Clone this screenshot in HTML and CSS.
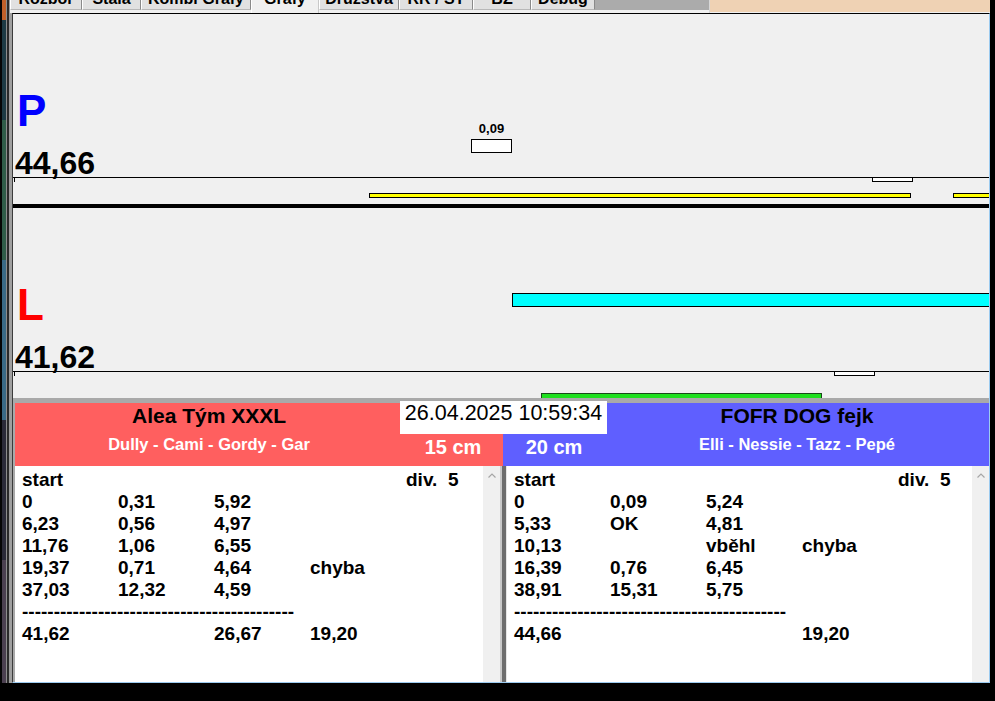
FILE: index.html
```html
<!DOCTYPE html>
<html lang="cs">
<head>
<meta charset="utf-8">
<title>Grafy</title>
<link rel="stylesheet" href="styles.css">
</head>
<body>
<div class="screen">
  <div class="desk"></div>
  <div class="app">
    <div class="tabstrip">
      <div class="tabs">
        <div class="tab w-rozbor"><span>Rozbor</span></div>
        <div class="tab w-stala"><span>Stála</span></div>
        <div class="tab w-kombi"><span>Kombi Grafy</span></div>
        <div class="tab w-grafy active"><span>Grafy</span></div>
        <div class="tab w-druz"><span>Družstva</span></div>
        <div class="tab w-rr"><span>RR / ST</span></div>
        <div class="tab w-bz"><span>BZ</span></div>
        <div class="tab w-debug"><span>Debug</span></div>
      </div>
      <div class="strip-gray"></div>
      <div class="strip-peach"></div>
    </div>

    <div class="main">
      <div class="chart">
        <div class="labels">
          <div class="side side-p">P</div>
          <div class="total">44,66</div>
        </div>
        <div class="axis"></div>
        <div class="lane"></div>
        <div class="tick"></div>
        <div class="flag" style="left:458px"><span class="flag-label">0,09</span><span class="flag-box"></span></div>
        <div class="slot" style="left:859px"></div>
        <div class="bar yellow" style="left:356px;width:542px"></div>
        <div class="bar yellow" style="left:940px;width:60px"></div>
      </div>

      <div class="sep"></div>

      <div class="chart">
        <div class="labels">
          <div class="side side-l">L</div>
          <div class="total">41,62</div>
        </div>
        <div class="axis"></div>
        <div class="lane"></div>
        <div class="tick"></div>
        <div class="bar cyan" style="left:499px;width:500px"></div>
        <div class="slot" style="left:821px"></div>
        <div class="bar green" style="left:528px;width:281px"></div>
      </div>

      <div class="bottom">
        <div class="header">
          <div class="team team-red">
            <div class="team-name">Alea Tým XXXL</div>
            <div class="team-dogs">Dully - Cami - Gordy - Gar</div>
            <div class="team-size">15 cm</div>
          </div>
          <div class="team team-blue">
            <div class="team-name">FOFR DOG fejk</div>
            <div class="team-dogs">Elli - Nessie - Tazz - Pepé</div>
            <div class="team-size">20 cm</div>
          </div>
          <div class="datebox">26.04.2025 10:59:34</div>
        </div>

        <div class="lists">
          <div class="list list-left">
            <div class="list-body">
              <div class="row"><span>start</span><span></span><span></span><span></span><span>div.  5</span></div>
              <div class="row"><span>0</span><span>0,31</span><span>5,92</span></div>
              <div class="row"><span>6,23</span><span>0,56</span><span>4,97</span></div>
              <div class="row"><span>11,76</span><span>1,06</span><span>6,55</span></div>
              <div class="row"><span>19,37</span><span>0,71</span><span>4,64</span><span>chyba</span></div>
              <div class="row"><span>37,03</span><span>12,32</span><span>4,59</span></div>
              <div class="row dash">-------------------------------------------</div>
              <div class="row"><span>41,62</span><span></span><span>26,67</span><span>19,20</span></div>
            </div>
            <div class="scroll">
              <svg class="arrow" width="8" height="5" viewBox="0 0 8 5"><path d="M0.5 4.5 L4 1 L7.5 4.5" fill="none" stroke="#a6a6a6" stroke-width="1.2"/></svg>
            </div>
          </div>
          <div class="gap"></div>
          <div class="list list-right">
            <div class="list-body">
              <div class="row"><span>start</span><span></span><span></span><span></span><span>div.  5</span></div>
              <div class="row"><span>0</span><span>0,09</span><span>5,24</span></div>
              <div class="row"><span>5,33</span><span>OK</span><span>4,81</span></div>
              <div class="row"><span>10,13</span><span></span><span>vběhl</span><span>chyba</span></div>
              <div class="row"><span>16,39</span><span>0,76</span><span>6,45</span></div>
              <div class="row"><span>38,91</span><span>15,31</span><span>5,75</span></div>
              <div class="row dash">-------------------------------------------</div>
              <div class="row"><span>44,66</span><span></span><span></span><span>19,20</span></div>
            </div>
            <div class="scroll">
              <svg class="arrow" width="8" height="5" viewBox="0 0 8 5"><path d="M0.5 4.5 L4 1 L7.5 4.5" fill="none" stroke="#a6a6a6" stroke-width="1.2"/></svg>
            </div>
          </div>
        </div>
      </div>
    </div>
  </div>
</div>
</body>
</html>
```

FILE: styles.css
```css
html, body {
  margin: 0;
  padding: 0;
  background: #000;
}

body {
  font-family: "Liberation Sans", Arial, sans-serif;
  color: #000;
}

.screen {
  width: 995px;
  height: 701px;
  display: flex;
  align-items: flex-start;
  background: #000;
  overflow: hidden;
}

.desk {
  width: 10px;
  height: 683px;
  background:
    linear-gradient(90deg, #050505 0 2px, transparent 2px 6px, #8c8c8c 6px 7px, #2a2a2a 7px 9px, #9a9a9a 9px 10px),
    linear-gradient(180deg, #c0602a 0 20px, #1d3a44 20px 120px, #2f5c48 120px 260px, #3a6a86 260px 420px, #2a2a38 420px 560px, #4b4050 560px 683px);
}

.app {
  width: 980px;
  height: 683px;
  display: flex;
  flex-direction: column;
  background: #a0a0a0;
}

/* ---------- tab strip ---------- */
.tabstrip {
  height: 13px;
  display: flex;
  flex: none;
}

.tabs {
  display: flex;
  width: 585px;
  height: 13px;
  background: #f0f0f0;
}

.tab {
  box-sizing: border-box;
  height: 10px;
  overflow: hidden;
  background: #e1e1e1;
  border-left: 1px solid #ffffff;
  border-right: 1px solid #8a8a8a;
  border-bottom: 1px solid #b8b8b8;
  text-align: center;
  font-weight: bold;
  font-size: 16px;
}

.tab span {
  display: block;
  line-height: 16px;
  margin-top: -9px;
  white-space: nowrap;
}

.tab.active {
  height: 13px;
  background: #f0f0f0;
  border-bottom: none;
  border-right-color: #c8c8c8;
}

.w-rozbor { width: 72px; }
.w-stala { width: 59px; }
.w-kombi { width: 110px; }
.w-grafy { width: 68px; }
.w-druz { width: 80px; }
.w-rr { width: 74px; }
.w-bz { width: 58px; }
.w-debug { width: 64px; }

.strip-gray {
  width: 114px;
  height: 13px;
  background: linear-gradient(180deg, #ababab 0 10px, #f0f0f0 10px);
  border-right: 1px solid #d8d8d8;
}

.strip-peach {
  width: 280px;
  height: 12px;
  background: #efd2b4;
  border-bottom: 1px solid #f0f0f0;
}

/* ---------- main panel ---------- */
.main {
  margin-left: 2px;
  width: 976px;
  height: 669px;
  border-top: 1px solid #000;
  border-left: 1px solid #3c3c3c;
  border-right: 1px solid #9ccbf0;
  border-bottom: 1px solid #9ccbf0;
  background: #f0f0f0;
  display: flex;
  flex-direction: column;
}

.chart {
  position: relative;
  height: 190px;
  flex: none;
  overflow: hidden;
  display: flex;
  flex-direction: column;
}

.labels {
  box-sizing: border-box;
  height: 163px;
  padding: 75px 0 0 2px;
}

.side {
  font-weight: bold;
  font-size: 44px;
  line-height: 44px;
  margin-left: 2px;
}

.side-p { color: #0000ff; }
.side-l { color: #ff0000; }

.total {
  font-weight: bold;
  font-size: 32px;
  line-height: 28px;
  margin-top: 16px;
}

.axis {
  height: 1px;
  background: #000;
  flex: none;
}

.lane {
  flex: 1;
}

.tick {
  position: absolute;
  left: 1px;
  top: 164px;
  width: 1px;
  height: 4px;
  background: #000;
}

.flag {
  position: absolute;
  top: 108px;
  width: 41px;
  display: flex;
  flex-direction: column;
  align-items: center;
}

.flag-label {
  font-weight: bold;
  font-size: 13px;
  line-height: 14px;
}

.flag-box {
  box-sizing: border-box;
  margin-top: 3px;
  width: 41px;
  height: 14px;
  background: #fff;
  border: 1px solid #000;
}

.slot {
  position: absolute;
  top: 163px;
  box-sizing: border-box;
  width: 41px;
  height: 5px;
  background: #fff;
  border: 1px solid #000;
}

.bar {
  position: absolute;
  box-sizing: border-box;
  border: 1px solid #000;
}

.yellow {
  top: 179px;
  height: 5px;
  background: #ffff00;
}

.cyan {
  top: 85px;
  height: 14px;
  background: #00ffff;
}

.green {
  top: 185px;
  height: 7px;
  background: #1ee01e;
  border-color: #1a4a1a;
}

.sep {
  height: 4px;
  background: #000;
  flex: none;
}

/* ---------- bottom panel ---------- */
.bottom {
  flex: 1;
  background: #a9a9a9;
  padding: 5px 0 0 2px;
  display: flex;
  flex-direction: column;
}

.header {
  position: relative;
  height: 63px;
  display: flex;
  flex: none;
}

.team {
  display: grid;
  grid-template-rows: 31px 32px;
}

.team-red {
  width: 488px;
  background: #ff5f5f;
  grid-template-columns: 388px 100px;
  grid-template-areas: "name ." "dogs size";
}

.team-blue {
  width: 486px;
  background: #5f5fff;
  grid-template-columns: 102px 384px;
  grid-template-areas: ". name" "size dogs";
}

.team-name {
  grid-area: name;
  text-align: center;
  font-weight: bold;
  font-size: 21px;
  line-height: 24px;
  padding-top: 1px;
  white-space: nowrap;
}

.team-dogs {
  grid-area: dogs;
  text-align: center;
  color: #fff;
  font-weight: bold;
  font-size: 16.5px;
  line-height: 20px;
  white-space: nowrap;
}

.team-size {
  grid-area: size;
  text-align: center;
  color: #fff;
  font-weight: bold;
  font-size: 20px;
  line-height: 24px;
  padding-top: 1px;
  white-space: nowrap;
}

.datebox {
  position: absolute;
  left: 385px;
  top: -2px;
  width: 207px;
  height: 33px;
  background: #fff;
  text-align: center;
  font-size: 21.5px;
  line-height: 24px;
  white-space: nowrap;
}

.lists {
  display: flex;
  height: 216px;
  flex: none;
}

.list {
  display: flex;
  background: #fff;
}

.list-left { width: 485px; }
.list-right { width: 482px; }

.list-body {
  flex: 1;
  padding: 3px 0 0 7px;
  font-weight: bold;
  font-size: 19px;
  line-height: 22px;
  overflow: hidden;
}

.row {
  display: grid;
  grid-template-columns: repeat(5, 96px);
  height: 22px;
  white-space: pre;
}

.dash {
  display: block;
}

.scroll {
  width: 17px;
  flex: none;
  background: #f0f0f0;
  display: flex;
  justify-content: center;
  align-items: flex-start;
}

.arrow {
  margin-top: 7px;
}

.gap {
  width: 7px;
  flex: none;
  background: linear-gradient(90deg, #c9c9c9 0 2px, #6e6e6e 2px 6px, #e6e6e6 6px);
}
```
